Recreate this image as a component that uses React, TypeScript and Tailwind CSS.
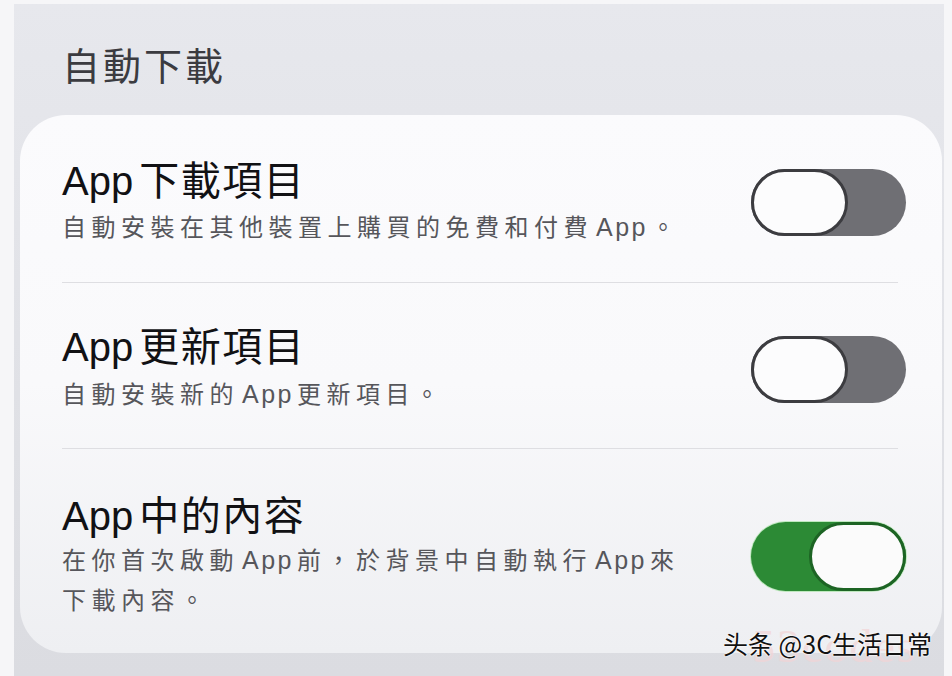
const font = "font-['Liberation_Sans','Noto_Sans_CJK_TC',sans-serif]";

type Row = {
  title: string;
  lines: string[];
  on: boolean;
  pad: string;
  gap: string;
};

const rows: Row[] = [
  { title: "下載項目", lines: ["自動安裝在其他裝置上購買的免費和付費 App 。"], on: false, pad: "pt-[42px] pb-[34px]", gap: "mt-[3px]" },
  { title: "更新項目", lines: ["自動安裝新的 App 更新項目。"], on: false, pad: "pt-[40px] pb-[33px]", gap: "mt-[4px]" },
  { title: "中的內容", lines: ["在你首次啟動 App 前，於背景中自動執行 App 來", "下載內容。"], on: true, pad: "pt-[43px] pb-[31px]", gap: "mt-[1px]" },
];

// Latin "App" inside the CJK caption keeps a tighter spacing
const Line = ({ text }: { text: string }) => (
  <div>
    {text.split(" ").map((part, i) =>
      part === "App" ? (
        <span key={i} className="mx-[3px] text-[25px] leading-[20px] tracking-[2.5px]">
          App
        </span>
      ) : (
        <span key={i}>{part}</span>
      )
    )}
  </div>
);

const Toggle = ({ on }: { on: boolean }) =>
  on ? (
    <div className="flex h-[69px] w-[155px] shrink-0 justify-end rounded-full bg-[#2c8a35] shadow-[0_0_0_1px_#bfe8bf]">
      <div className="h-full w-[97px] rounded-full border-[3px] border-[#1d6424] bg-[#fbfbfb]" />
    </div>
  ) : (
    <div className="flex h-[67px] w-[155px] shrink-0 rounded-full bg-[#6f6f74]">
      <div className="h-full w-[97px] rounded-full border-[3px] border-[#3c3c40] bg-[#fcfcfd]" />
    </div>
  );

export default function App() {
  return (
    <div className={`relative h-[676px] w-[952px] overflow-hidden bg-[#f6f6f8] pl-[14px] pr-[8px] pt-[4px] ${font}`}>
      <div className="h-full bg-gradient-to-b from-[#e7e8ed] to-[#dbdce1] pt-[39px]">
        <h2 className="pl-[48px] text-[38px] font-normal leading-[48px] tracking-[3px] text-[#3b3b40]">自動下載</h2>

        <div className="ml-[6px] mr-[2px] mt-[24px] h-[538px] rounded-[46px] bg-gradient-to-b from-[#fbfbfd] via-[#f9f9fb] to-[#eeeff2]">
          {rows.map((row, i) => (
            <div key={row.title}>
              {i > 0 && <div className="ml-[42px] mr-[44px] h-px bg-[#dedee2]" />}
              <div className={`flex items-center justify-between pl-[42px] pr-[36px] ${row.pad}`}>
                <div>
                  <div className="text-[40px] leading-[48px] text-[#111114]">
                    <span>App</span>
                    <span className="ml-[6px] tracking-[1.5px]">{row.title}</span>
                  </div>
                  <div className={`${row.gap} text-[24px] leading-[40px] tracking-[5.5px] text-[#56565b]`}>
                    {row.lines.map((line) => (
                      <Line key={line} text={line} />
                    ))}
                  </div>
                </div>
                <Toggle on={row.on} />
              </div>
            </div>
          ))}
        </div>
      </div>

      <div className="absolute left-[752px] top-[622px] font-['Liberation_Serif',serif] text-[46px] leading-[50px] tracking-[2px] text-[#f2d4d6] opacity-70">
        53codes
      </div>
      <div className="absolute left-[723px] top-[629px] font-['Noto_Sans_CJK_SC',sans-serif] text-[25px] leading-[28px] text-[#111] [text-shadow:0_0_2px_#fff,0_0_2px_#fff,0_0_1px_#fff]">
        头条 @3C生活日常
      </div>
    </div>
  );
}
